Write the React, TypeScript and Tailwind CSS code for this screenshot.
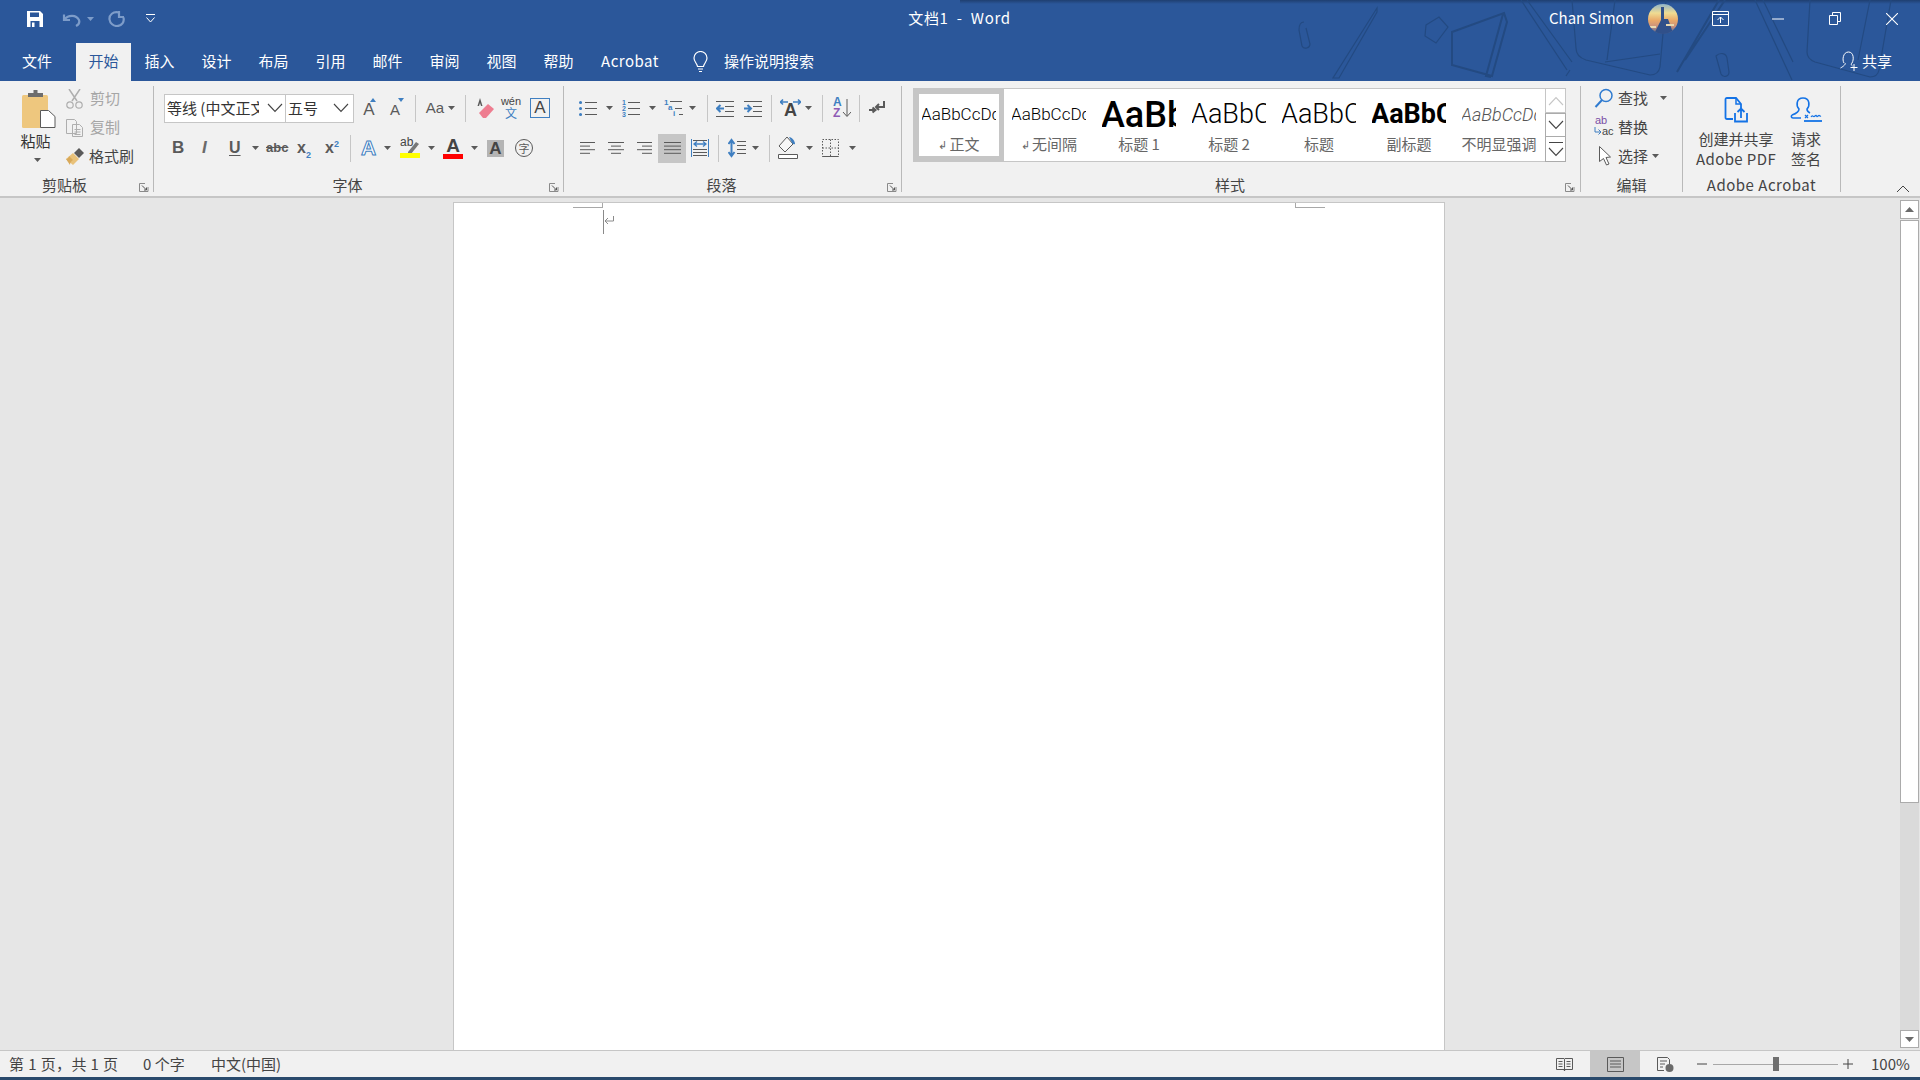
import React from "react";

type IP = { w: number; h: number; c?: string; children: React.ReactNode };
const I = ({ w, h, c, children }: IP) => (
  <svg width={w} height={h} viewBox={`0 0 ${w} ${h}`} fill="none" className={"shrink-0 " + (c ?? "")}>
    {children}
  </svg>
);
const G = "#5a5a5a";
const B = "#3f7fc1";

const Caret = ({ c = "", color = G }: { c?: string; color?: string }) => (
  <I w={7} h={4} c={c}>
    <path d="M0 0H7L3.5 4Z" fill={color} />
  </I>
);
const Sep = ({ c = "" }: { c?: string }) => <div className={"w-px h-[27px] bg-[#c6c6c6] shrink-0 " + c} />;

const Launcher = ({ c }: { c: string }) => (
  <I w={10} h={9} c={"absolute bottom-0 " + c}>
    <path d="M.5 8.5V.5H6M.5 8.5H9V4" stroke="#8a8a8a" />
    <path d="M3 2.5 7.5 7M7.5 4.5V7H5" stroke="#555" />
  </I>
);

const Group = ({ w, title, children, launcher, t = "" }: { w: string; title: string; children: React.ReactNode; launcher?: string; t?: string }) => (
  <div className={"relative flex flex-col h-[106px] mt-[5px] border-r border-[#b9b9b9] shrink-0 " + w}>
    <div className="h-[91px] overflow-visible">{children}</div>
    <div className={"h-[15px] leading-[16px] text-center text-[15px] text-[#444444] " + t}>{title}</div>
    {launcher && <Launcher c={launcher} />}
  </div>
);

const Row = ({ children }: { children: React.ReactNode }) => <div className="flex items-center h-[28px]">{children}</div>;

const lineSet = (ys: number[], x1: number, x2: number) => ys.map((y) => <path key={y} d={`M${x1} ${y + 0.5}H${x2}`} stroke={G} />);
const Align = ({ w, rows, c }: { w: number; rows: [number, number][]; c?: string }) => (
  <I w={w} h={14} c={c}>
    {rows.map(([a, b], i) => (
      <path key={i} d={`M${a} ${1.5 + i * 3.6}H${b}`} stroke={G} />
    ))}
  </I>
);

const Chevron = ({ c = "", color = "#444" }: { c?: string; color?: string }) => (
  <I w={16} h={10} c={c}>
    <path d="M1 1 8 8.5 15 1" stroke={color} strokeWidth="1.1" />
  </I>
);

function Paste() {
  return (
    <I w={35} h={38}>
      <rect x="1" y="5" width="26" height="33" rx="1.5" fill="#eec77e" />
      <path d="M7 5V3h5.5V0h4v3H22v4H7Z" fill="#6d6d6d" />
      <path d="M19.5 20.5h8l6.5 6v11H19.5Z" fill="#fff" stroke="#5a5a5a" />
    </I>
  );
}

const Style = ({ text, label, ret, sel, p }: { text: string; label: string; ret?: boolean; sel?: boolean; p: string }) => (
  <div className={"flex flex-col items-center h-[72px] w-[90px] border-[5px] shrink-0 " + (sel ? "border-[#c6c6c6]" : "border-transparent")}>
    <div className="h-[40px] w-[74px] overflow-hidden flex items-center">
      <span className={"whitespace-nowrap -ml-[1px] pt-[1px] font-['Roboto',sans-serif] " + p}>{text}</span>
    </div>
    <div className="h-[20px] leading-[20px] text-[15px] text-[#666666] whitespace-nowrap flex items-center">
      {ret && <span className="text-[11px] mr-[2px]">↲</span>}
      {label}
    </div>
  </div>
);

export default function App() {
  return (
    <div className="w-[1920px] h-[1080px] flex flex-col overflow-hidden bg-[#e6e6e6] text-[15px] font-['Noto_Sans_CJK_SC','Liberation_Sans',sans-serif]">
      {/* title + tabs */}
      <div className="relative h-[81px] bg-[#2b579a] text-white shrink-0">
        <div className="absolute top-0 right-0 w-[960px] h-[4px] bg-gradient-to-b from-[#1f3f70] to-transparent" />
        <svg width={640} height={81} viewBox="0 0 640 81" fill="none" className="absolute top-0 right-0" stroke="#234a82" strokeWidth="1.2">
          <path d="M97 8 53 78h6L97 12ZM24 22c-5 0-5 5-5 8l3 16c2 4 8 2 8-2l-4-16" />
          <path d="M146 25l13-8 9 10-12 16-11-7Z" />
          <path d="M172 32l52-19 3 9-15 54-40-11ZM223 14l-17 62 5 1" strokeWidth="2" />
          <path d="M241 0l46 70M247 0l45 62M290 70l-4 6" />
          <path d="M292 0l4 48c0 6 4 10 10 12l64 15c6 0 9-3 10-8l6-67M325 62l55-8M335 0l-8 60" />
          <path d="M439 0l-42 72M445 0l-40 60" strokeWidth="2" />
          <path d="M436 56c4-4 10-3 11 2l2 14c0 5-6 6-8 2Z" />
          <path d="M475 0l37 80M483 0l30 62" />
          <path d="M530 0l-3 52c0 5 3 8 8 10l55 15c5 0 8-2 9-7l12-70M590 0l-12 60" />
        </svg>
        <div className="relative flex items-center h-[37px]">
          <I w={16} h={16} c="ml-[27px]">
            <path d="M0 0H13L16 3V16H0Z" fill="#fff" />
            <path d="M3 1.5H12V6H3ZM3.5 10H12.5V16H3.5Z" fill="#2b579a" />
            <path d="M5 11.5H7.5V16H5Z" fill="#fff" />
          </I>
          <I w={19} h={16} c="ml-[19px]">
            <path d="M2 3.5V9H8M2.5 8.5C6 4 14 3 17 9c1 3-1 5-3 6" stroke="#7d9cc9" strokeWidth="2.200" />
          </I>
          <Caret c="ml-[6px]" color="#7d9cc9" />
          <I w={17} h={16} c="ml-[14px]">
            <path d="M11 1.5C5 0 1 4 1.500 8.500c.5 4 4 6.500 7.500 6.500 5 0 7.500-4 6.500-8.500M11 0v6h5" stroke="#7d9cc9" strokeWidth="2.200" />
          </I>
          <I w={9} h={10} c="ml-[21px]">
            <path d="M0 .5H9M.5 3.500 4.500 8 8.500 3.500" stroke="#fff" />
          </I>
          <div className="ml-[753px] w-[103px] whitespace-pre text-center leading-[20px] pb-[2px] tracking-[0.7px]">{"文档1  -  Word"}</div>
          <div className="ml-[538px] w-[86px] whitespace-nowrap leading-[20px] pb-[1px]">Chan Simon</div>
          <I w={30} h={30} c="ml-[13px]">
            <defs>
              <clipPath id="av">
                <ellipse cx="15" cy="15" rx="15" ry="15" />
              </clipPath>
              <linearGradient id="avg" x1="0" y1="0" x2="0" y2="1">
                <stop offset="0" stopColor="#8fb3c9" />
                <stop offset=".3" stopColor="#efdc93" />
                <stop offset=".55" stopColor="#e9a868" />
                <stop offset=".75" stopColor="#c9917e" />
                <stop offset="1" stopColor="#3c5f94" />
              </linearGradient>
            </defs>
            <g clipPath="url(#av)">
              <rect width="30" height="30" fill="url(#avg)" />
              <path d="M13 3h3v12h4l3 8 2 7H6l4-8 3-6Z" fill="#30508a" />
              <path d="M2 22h6v2H2ZM18 20h8v2h-8Z" fill="#e8d8b0" />
            </g>
          </I>
          <I w={17} h={15} c="ml-[34px]">
            <path d="M.5.5h16v14H.5ZM.5 3.500h16" stroke="#fff" />
            <path d="M8.500 12V6M5.500 9l3-3 3 3" stroke="#fff" />
          </I>
          <I w={12} h={2} c="ml-[43px]">
            <path d="M0 1H12" stroke="#fff" />
          </I>
          <I w={12} h={13} c="ml-[45px]">
            <path d="M.5 3.500h8v9h-8ZM3.500 3.500v-3h8v9h-3" stroke="#fff" />
          </I>
          <I w={12} h={12} c="ml-[45px]">
            <path d="M0 0 12 12M12 0 0 12" stroke="#fff" strokeWidth="1.1" />
          </I>
        </div>
        <div className="relative flex h-[44px] items-end">
          <div className="ml-[8px] w-[58px] h-[38px] leading-[36px] text-center">文件</div>
          <div className="ml-[10px] w-[55px] h-[38px] leading-[36px] text-center bg-[#f1f1f1] text-[#2b579a]">开始</div>
          <div className="w-[57px] h-[38px] leading-[36px] text-center">插入</div>
          <div className="w-[57px] h-[38px] leading-[36px] text-center">设计</div>
          <div className="w-[57px] h-[38px] leading-[36px] text-center">布局</div>
          <div className="w-[57px] h-[38px] leading-[36px] text-center">引用</div>
          <div className="w-[57px] h-[38px] leading-[36px] text-center">邮件</div>
          <div className="w-[57px] h-[38px] leading-[36px] text-center">审阅</div>
          <div className="w-[57px] h-[38px] leading-[36px] text-center">视图</div>
          <div className="w-[57px] h-[38px] leading-[36px] text-center">帮助</div>
          <div className="w-[86px] h-[38px] leading-[36px] text-center tracking-[0.5px]">Acrobat</div>
          <div className="flex items-center h-[36px] mb-[2px] ml-[20px]">
            <I w={15} h={21}>
              <path d="M4.500 15.500C4 12 1 11 1 7a6.500 6.500 0 0 1 13 0c0 4-3 5-3.500 8.500ZM5 18h5M6 20.500h3" stroke="#fff" strokeWidth="1.2" />
            </I>
            <span className="ml-[16px] whitespace-nowrap">操作说明搜索</span>
          </div>
          <div className="ml-auto mr-[28px] flex items-center h-[36px] mb-[2px]">
            <I w={18} h={20}>
              <path d="M4 12C2 9 3 1 8.500 1S14 9 12 12c-1 1-1 2 .5 3M5 12c1 1-1 3-4.500 5" stroke="#fff" />
              <path d="M14 13v7M10.500 16.500h7" stroke="#fff" />
            </I>
            <span className="ml-[4px] whitespace-nowrap">共享</span>
          </div>
        </div>
      </div>

      {/* ribbon */}
      <div className="flex h-[117px] bg-[#f1f1f1] border-b-2 border-[#c6c6c6] shrink-0 text-[#444444]">
        {/* clipboard */}
        <Group w="w-[154px]" title="剪贴板" launcher="right-[4px]" t="pr-[24px]">
          <div className="flex">
            <div className="ml-[20px] w-[36px] flex flex-col items-center pt-[4px]">
              <Paste />
              <span className="mt-[3px] mr-[5px] leading-[20px] whitespace-nowrap text-[#333333]">粘贴</span>
              <Caret c="mt-[7px] mr-[2px]" />
            </div>
            <div className="ml-[10px] flex flex-col">
              <div className="flex items-center h-[29px] mt-[-2px] text-[#a6a6a6]">
                <I w={17} h={20}>
                  <path d="M3 0 11 12M14 0 6 12" stroke="#aeaeae" strokeWidth="1.5" />
                  <circle cx="4" cy="16" r="3.200" stroke="#aeaeae" strokeWidth="1.200" />
                  <circle cx="13" cy="16" r="3.200" stroke="#aeaeae" strokeWidth="1.200" />
                </I>
                <span className="ml-[7px] whitespace-nowrap">剪切</span>
              </div>
              <div className="flex items-center h-[29px] text-[#a6a6a6]">
                <I w={17} h={18}>
                  <path d="M.5.5h8l2 2v12H.5ZM6.500 5.500h7l3 3v9h-10Z" stroke="#aeaeae" fill="#f1f1f1" />
                  <path d="M8.500 10.500h6M8.500 13h6M8.500 15.500h6" stroke="#aeaeae" />
                </I>
                <span className="ml-[7px] whitespace-nowrap">复制</span>
              </div>
              <div className="flex items-center h-[29px]">
                <I w={18} h={17}>
                  <path d="M0 11 7 5l6 6-6 6Z" fill="#e9c27a" />
                  <path d="M0 11c2 0 3-2 3-3l4 4c-2 1-3 3-3 5Z" fill="#d8a95a" />
                  <path d="M8 5 13 0l5 5-5 5Z" fill="#5a5a5a" />
                </I>
                <span className="ml-[5px] whitespace-nowrap">格式刷</span>
              </div>
            </div>
          </div>
        </Group>

        {/* font */}
        <Group w="w-[410px]" title="字体" launcher="right-[4px]" t="pr-[22px]">
          <div className="pt-[8px]">
            <Row>
              <div className="ml-[10px] w-[122px] h-[29px] bg-white border border-[#c6c6c6] flex items-center pl-[2px] shrink-0">
                <span className="w-[92px] overflow-hidden whitespace-nowrap text-[#333333]">等线 (中文正文)</span>
                <Chevron c="ml-[8px]" />
              </div>
              <div className="w-[69px] h-[29px] bg-white border border-[#c6c6c6] flex items-center pl-[2px] ml-[-1px] shrink-0">
                <span className="w-[44px] whitespace-nowrap text-[#333333]">五号</span>
                <Chevron c="ml-[1px]" />
              </div>
              <div className="ml-[5px] w-[20px] h-[24px] relative shrink-0 text-center leading-[28px] text-[17px] text-[#5a5a5a] font-['Liberation_Sans',sans-serif]">
                A
                <I w={6} h={4} c="absolute top-[2px] right-[3px]">
                  <path d="M0 4 3 0 6 4Z" fill={B} />
                </I>
              </div>
              <div className="ml-[6px] w-[20px] h-[24px] relative shrink-0 text-center leading-[28px] text-[15px] text-[#5a5a5a] font-['Liberation_Sans',sans-serif]">
                A
                <I w={6} h={4} c="absolute top-[2px] right-[1px]">
                  <path d="M0 0H6L3 4Z" fill={B} />
                </I>
              </div>
              <Sep c="ml-[10px]" />
              <div className="ml-[9px] w-[20px] text-center text-[15px] leading-[20px] text-[#5a5a5a] font-['Liberation_Sans',sans-serif] shrink-0">Aa</div>
              <Caret c="ml-[3px]" />
              <Sep c="ml-[10px]" />
              <I w={17} h={21} c="ml-[11px]">
                <path d="M3 0 .5 8h1.500L3 5l1 3h1.500Z" fill={G} />
                <path d="M2 15 11 6l6 5-8 9H6Z" fill="#ee7d90" />
              </I>
              <div className="ml-[9px] w-[16px] h-[26px] flex flex-col items-center leading-[12px] shrink-0">
                <span className="text-[11px] text-[#444444] font-['Liberation_Sans',sans-serif]">wén</span>
                <span className="text-[12px] text-[#3f7fc1]">文</span>
              </div>
              <div className="ml-[11px] w-[20px] h-[20px] border border-[#3f7fc1] text-center leading-[18px] text-[17px] text-[#444444] font-['Liberation_Sans',sans-serif] shrink-0">A</div>
            </Row>
            <div className="flex items-center h-[28px] mt-[12px] font-['Liberation_Sans',sans-serif] text-[#5a5a5a]">
              <span className="ml-[18px] w-[10px] font-bold text-[17px] leading-[20px] shrink-0">B</span>
              <span className="ml-[20px] w-[9px] italic font-bold text-[17px] leading-[20px] text-[#6a6a6a] shrink-0">I</span>
              <span className="ml-[18px] w-[10px] font-bold text-[16px] leading-[20px] underline underline-offset-2 shrink-0">U</span>
              <Caret c="ml-[13px]" />
              <span className="ml-[7px] w-[20px] text-[13px] font-bold leading-[18px] line-through shrink-0">abc</span>
              <span className="ml-[11px] w-[14px] font-bold text-[16px] leading-[20px] relative shrink-0">
                x<span className="absolute left-[9px] top-[7px] text-[9px] text-[#3f7fc1]">2</span>
              </span>
              <span className="ml-[14px] w-[14px] font-bold text-[16px] leading-[20px] relative shrink-0">
                x<span className="absolute left-[9px] top-[-4px] text-[9px] text-[#3f7fc1]">2</span>
              </span>
              <Sep c="ml-[11px]" />
              <span className="ml-[10px] w-[16px] text-[21px] leading-[22px] font-bold text-white [-webkit-text-stroke:1px_#3f7fc1] shrink-0">A</span>
              <Caret c="ml-[7px]" />
              <div className="ml-[9px] w-[20px] h-[20px] relative flex flex-col shrink-0">
                <I w={20} h={20}>
                  <path d="M8 14 16 4l3 2-8 10H8Z" fill="#777" />
                  <rect y="15" width="20" height="5" fill="#ffff00" />
                </I>
                <span className="absolute left-0 top-[-2px] text-[12px] leading-[12px] text-[#444444]">ab</span>
              </div>
              <Caret c="ml-[8px]" />
              <div className="ml-[8px] w-[20px] h-[22px] flex flex-col items-center shrink-0">
                <span className="h-[16px] text-[19px] leading-[17px] font-bold text-[#444444]">A</span>
                <span className="w-[20px] h-[5px] mt-[1px] bg-[#ff0000]" />
              </div>
              <Caret c="ml-[8px]" />
              <span className="ml-[9px] w-[17px] h-[17px] bg-[#b4b4b4] text-center text-[17px] leading-[18px] font-bold text-[#444444] shrink-0">A</span>
              <span className="ml-[11px] w-[18px] h-[18px] rounded-full border border-[#5a5a5a] text-center text-[11px] leading-[16px] shrink-0 font-['Noto_Sans_CJK_SC',sans-serif]">字</span>
            </div>
          </div>
        </Group>

        {/* paragraph */}
        <Group w="w-[338px]" title="段落" launcher="right-[4px]" t="pr-[22px]">
          <div className="pt-[8px]">
            <Row>
              <I w={18} h={17} c="ml-[15px]">
                <path d="M1.500 2.500h.1M1.500 8.500h.1M1.500 14.500h.1" stroke={B} strokeWidth="3" strokeLinecap="round" />
                {lineSet([2, 8, 14], 6, 18)}
              </I>
              <Caret c="ml-[9px]" />
              <div className="ml-[9px] w-[18px] h-[17px] relative shrink-0">
                <I w={18} h={17}>{lineSet([2, 8, 14], 6, 18)}</I>
                <span className="absolute left-0 top-0 w-[5px] flex flex-col text-[7px] leading-[6px] font-bold text-[#3f7fc1] font-['Liberation_Sans',sans-serif]">
                  <span>1</span>
                  <span>2</span>
                  <span>3</span>
                </span>
              </div>
              <Caret c="ml-[9px]" />
              <div className="ml-[8px] w-[19px] h-[17px] relative shrink-0">
                <I w={19} h={17}>
                  {lineSet([1], 6, 18)}
                  {lineSet([8], 11, 18)}
                  {lineSet([14], 15, 19)}
                </I>
                <span className="absolute left-0 top-0 text-[8px] leading-[6px] font-bold text-[#3f7fc1] font-['Liberation_Sans',sans-serif]">1</span>
                <span className="absolute left-[4px] top-[5px] text-[8px] leading-[6px] font-bold text-[#3f7fc1] font-['Liberation_Sans',sans-serif]">a</span>
                <span className="absolute left-[9px] top-[11px] text-[8px] leading-[6px] font-bold text-[#3f7fc1] font-['Liberation_Sans',sans-serif]">i</span>
              </div>
              <Caret c="ml-[6px]" />
              <Sep c="ml-[11px]" />
              <I w={18} h={17} c="ml-[8px]">
                {lineSet([1, 16], 0, 18)}
                {lineSet([6, 11], 9, 18)}
                <path d="M8 8.500H1M4.500 5 1 8.500 4.500 12" stroke={B} strokeWidth="2" />
              </I>
              <I w={18} h={17} c="ml-[10px]">
                {lineSet([1, 16], 0, 18)}
                {lineSet([6, 11], 9, 18)}
                <path d="M0 8.500H7M3.500 5 7 8.500 3.500 12" stroke={B} strokeWidth="2" />
              </I>
              <Sep c="ml-[9px]" />
              <div className="ml-[8px] w-[21px] h-[20px] relative shrink-0">
                <I w={21} h={20}>
                  <path d="M1 4h7M3 1.500.5 4 3 6.500M13 4h7M18 1.500 20.500 4 18 6.500" stroke={B} strokeWidth="1.600" />
                </I>
                <span className="absolute left-[2px] top-[3px] w-[17px] text-center text-[18px] leading-[18px] font-bold text-[#444444] font-['Liberation_Sans',sans-serif]">A</span>
              </div>
              <Caret c="ml-[4px]" />
              <Sep c="ml-[10px]" />
              <div className="ml-[10px] w-[18px] h-[20px] relative shrink-0 font-['Liberation_Sans',sans-serif]">
                <span className="absolute left-0 top-[-1px] text-[12px] leading-[11px] text-[#3f7fc1] font-bold">A</span>
                <span className="absolute left-0 top-[10px] text-[12px] leading-[11px] text-[#8e5ab5] font-bold">Z</span>
                <I w={18} h={20}>
                  <path d="M14 1V18M10 14l4 4.500 4-4.500" stroke={G} />
                </I>
              </div>
              <Sep c="ml-[8px]" />
              <I w={16} h={16} c="ml-[9px]">
                <path d="M15 1v6H7.500M10 4 7 7l3 3" stroke={G} strokeWidth="2" />
                <path d="M0 10h6M3.500 7.500l3 2.500-3 2.500" stroke={G} strokeWidth="2" />
              </I>
            </Row>
            <div className="flex items-center h-[28px] mt-[12px]">
              <Align w={15} c="ml-[16px]" rows={[[0, 15], [0, 10], [0, 15], [0, 10]]} />
              <Align w={16} c="ml-[13px]" rows={[[0, 16], [3, 13], [0, 16], [3, 13]]} />
              <Align w={15} c="ml-[13px]" rows={[[0, 15], [5, 15], [0, 15], [5, 15]]} />
              <div className="ml-[6px] w-[28px] h-[29px] bg-[#c6c6c6] flex items-center justify-center shrink-0">
                <Align w={17} rows={[[0, 17], [0, 17], [0, 17], [0, 17]]} />
              </div>
              <I w={18} h={18} c="ml-[5px]">
                <path d="M.5 0v18M17.500 0v18" stroke={B} />
                {lineSet([1, 10, 13, 16], 2, 16)}
                <path d="M3 5h12M6 2.500 3 5l3 2.500M12 2.500 15 5l-3 2.500" stroke={B} strokeWidth="1.300" />
              </I>
              <Sep c="ml-[9px]" />
              <I w={18} h={20} c="ml-[9px]">
                <path d="M3.500 3v14M.5 6l3-4 3 4M.5 14l3 4 3-4" stroke={B} strokeWidth="2" />
                {lineSet([3, 7, 11, 15], 9, 18)}
              </I>
              <Caret c="ml-[6px]" />
              <Sep c="ml-[10px]" />
              <I w={20} h={22} c="ml-[8px]">
                <path d="M9 0 1 9l6 6 8-8Z" stroke={G} fill="#f7f7f7" />
                <path d="M11 0c3 0 6 4 6 7-2 1-3-1-4-3Z" fill={B} />
                <path d="M.5 17.500h19v4H.5Z" stroke={G} fill="#fff" />
              </I>
              <Caret c="ml-[8px]" />
              <I w={17} h={18} c="ml-[9px]">
                <path d="M.5.5h16v17H.5ZM8.500.5v17M.5 9h16" stroke={G} strokeDasharray="1.500 1.500" />
                <path d="M.5 17.500h16" stroke={G} />
              </I>
              <Caret c="ml-[10px]" />
            </div>
          </div>
        </Group>

        {/* styles */}
        <Group w="w-[679px]" title="样式" launcher="right-[5px]" t="pr-[22px]">
          <div className="flex ml-[11px] mt-[2px] h-[74px]">
            <div className="w-[632px] h-[74px] bg-white border-y border-l border-[#c6c6c6] flex shrink-0 text-black">
              <Style sel ret text="AaBbCcDdEe" label="正文" p="text-[17px] font-light" />
              <Style ret text="AaBbCcDdEe" label="无间隔" p="text-[17px] font-light" />
              <Style text="AaBbCc" label="标题 1" p="text-[36px] font-medium" />
              <Style text="AaBbCc" label="标题 2" p="text-[27px] font-light" />
              <Style text="AaBbCc" label="标题" p="text-[27px] font-light" />
              <Style text="AaBbCc" label="副标题" p="text-[27px] font-bold" />
              <Style text="AaBbCcDdEe" label="不明显强调" p="text-[18px] italic font-light text-[#555555]" />
            </div>
            <div className="w-[21px] h-[74px] flex flex-col shrink-0">
              <div className="h-[25px] border border-[#c6c6c6] bg-white flex items-center justify-center">
                <I w={16} h={10}>
                  <path d="M1 9 8 1.500 15 9" stroke="#c6c6c6" strokeWidth="1.100" />
                </I>
              </div>
              <div className="h-[24px] border-x border-[#ababab] border-y bg-white flex items-center justify-center">
                <Chevron />
              </div>
              <div className="h-[25px] border border-t-0 border-[#ababab] bg-white flex flex-col items-center justify-center gap-[4px]">
                <div className="w-[14px] h-px bg-[#444444]" />
                <Chevron />
              </div>
            </div>
          </div>
        </Group>

        {/* editing */}
        <Group w="w-[102px]" title="编辑">
          <div className="flex flex-col justify-between h-[82px]">
            <div className="flex items-center h-[24px]">
              <I w={19} h={20} c="ml-[13px]">
                <circle cx="12" cy="7.500" r="6" stroke="#2f7bd0" strokeWidth="1.500" />
                <path d="M8 12 1.500 19" stroke="#2f7bd0" strokeWidth="2" />
              </I>
              <span className="ml-[5px] whitespace-nowrap">查找</span>
              <Caret c="ml-[12px]" />
            </div>
            <div className="flex items-center h-[24px]">
              <div className="ml-[13px] w-[21px] h-[22px] relative shrink-0 font-['Liberation_Sans',sans-serif]">
                <span className="absolute left-[1px] top-[-1px] text-[11px] leading-[11px] text-[#7a4fa5]">ab</span>
                <span className="absolute left-[8px] top-[10px] text-[11px] leading-[11px] text-[#444444]">ac</span>
                <I w={8} h={10} c="absolute left-0 top-[11px]">
                  <path d="M1 0v5h6M4.500 2.500 7 5 4.500 7.500" stroke={B} />
                </I>
              </div>
              <span className="ml-[3px] whitespace-nowrap">替换</span>
            </div>
            <div className="flex items-center h-[24px]">
              <I w={12} h={20} c="ml-[18px]">
                <path d="M.5.5v15l4-3 3 6.500 2.500-1-3-6.500 4.500-.5Z" stroke={G} fill="#fff" />
              </I>
              <span className="ml-[7px] whitespace-nowrap">选择</span>
              <Caret c="ml-[4px]" />
            </div>
          </div>
        </Group>

        {/* acrobat */}
        <Group w="w-[158px]" title="Adobe Acrobat" t="tracking-[0.5px] whitespace-nowrap">
          <div className="flex">
            <div className="w-[106px] flex flex-col items-center pt-[11px] shrink-0">
              <I w={24} h={26}>
                <path d="M9 22H3c-1 0-1.500-.5-1.500-1.500V2.500C1.500 1.500 2 1 3 1h9l5 6v4" stroke="#1473e6" strokeWidth="1.800" />
                <path d="M12 1v6h5" stroke="#1473e6" strokeWidth="1.500" />
                <path d="M11 16v8.500h12V16M17 21v-9M13.500 15l3.500-3.500 3.500 3.500" stroke="#1473e6" strokeWidth="1.800" />
              </I>
              <span className="mt-[6px] h-[20px] leading-[20px] whitespace-nowrap">创建并共享</span>
              <span className="h-[19px] leading-[19px] whitespace-nowrap tracking-[0.4px]">Adobe PDF</span>
            </div>
            <div className="w-[34px] flex flex-col items-center pt-[11px] shrink-0">
              <I w={32} h={26}>
                <path d="M2 18c3-1 7-3 7-6-3-3-3-11 4-11s7 8 4 11c0 2 1 3 3 4M2 18c-1 1-1 3 1 3h8" stroke="#1473e6" strokeWidth="1.600" />
                <path d="M15 18l3 3M18 18l-3 3M21 20c2-3 2 1 4-1s1 2 3 0 1 1 3 0" stroke="#1473e6" strokeWidth="1.200" />
                <path d="M14 24h18" stroke="#1473e6" strokeWidth="1.800" />
              </I>
              <span className="mt-[6px] h-[20px] leading-[20px] whitespace-nowrap">请求</span>
              <span className="h-[19px] leading-[19px] whitespace-nowrap">签名</span>
            </div>
          </div>
        </Group>

        <I w={14} h={8} c="self-end mb-[3px] ml-[55px]">
          <path d="M1 7 7 1l6 6" stroke="#444" />
        </I>
      </div>

      {/* document area */}
      <div className="flex-1 flex min-h-0 bg-[#e6e6e6]">
        <div className="flex-1 flex justify-center pt-[4px] pr-[2px] min-w-0">
          <div className="relative w-[992px] h-full bg-white border-x border-t border-[#c6c6c6]">
            <div className="absolute left-[119px] top-0 w-[30px] h-[5px] border-b border-r border-[#a8a8a8]" />
            <div className="absolute left-[841px] top-0 w-[30px] h-[5px] border-b border-l border-[#a8a8a8]" />
            <div className="absolute left-[149px] top-[7px] w-px h-[24px] bg-[#8a8a8a]" />
            <I w={11} h={9} c="absolute left-[150px] top-[13px]">
              <path d="M9.500 0v5H1M4 2 1 5l3 3" stroke="#8a8a8a" />
            </I>
          </div>
        </div>
        <div className="w-[19px] mr-px pt-[2px] pb-[2px] flex flex-col shrink-0 bg-[#e6e6e6]">
          <div className="h-[19px] bg-white border border-[#ababab] flex items-center justify-center shrink-0">
            <I w={9} h={5}>
              <path d="M0 5 4.500 0 9 5Z" fill="#6a6a6a" />
            </I>
          </div>
          <div className="h-[583px] mt-px bg-white border border-[#ababab] shrink-0" />
          <div className="flex-1 bg-[#dadada]" />
          <div className="h-[18px] bg-white border border-[#ababab] flex items-center justify-center shrink-0">
            <I w={9} h={5}>
              <path d="M0 0H9L4.500 5Z" fill="#6a6a6a" />
            </I>
          </div>
        </div>
      </div>

      {/* status */}
      <div className="h-[27px] flex items-center bg-[#f1f1f1] border-t border-[#c6c6c6] text-[15px] text-[#444444] shrink-0">
        <span className="ml-[9px] w-[109px] whitespace-nowrap leading-[20px] tracking-[0.4px]">第 1 页，共 1 页</span>
        <span className="ml-[25px] w-[43px] whitespace-nowrap leading-[20px]">0 个字</span>
        <span className="ml-[25px] w-[68px] whitespace-nowrap leading-[20px]">中文(中国)</span>
        <I w={17} h={15} c="ml-[1277px]">
          <path d="M.5 1.500h7.500l.5 1 .5-1h7.500v11H9l-.5 1.500-.5-1.500H.5ZM8.500 2.500v11" stroke={G} />
          <path d="M2.500 4.500h4M2.500 7h4M2.500 9.500h4M10.500 4.500h4M10.500 7h4M10.500 9.500h4" stroke={G} />
        </I>
        <div className="ml-[17px] w-[50px] h-[26px] bg-[#c6c6c6] flex items-center justify-center shrink-0">
          <I w={17} h={15}>
            <path d="M.5.5h16v14H.5Z" stroke={G} />
            <path d="M3 4h11M3 7h11M3 10h11" stroke={G} />
          </I>
        </div>
        <I w={17} h={15} c="ml-[17px]">
          <path d="M.5.5h10l2 2v5M.5.5v13H7" stroke={G} />
          <path d="M3 4h7M3 7h5M3 10h3" stroke={G} />
          <circle cx="12.500" cy="11" r="4" fill="#6a6a6a" />
        </I>
        <I w={10} h={2} c="ml-[23px]">
          <path d="M0 1H10" stroke="#444" />
        </I>
        <div className="ml-[6px] w-[125px] h-[14px] flex items-center shrink-0">
          <div className="w-[60px] h-px bg-[#a8a8a8]" />
          <div className="w-[6px] h-[14px] bg-[#6f6f6f]" />
          <div className="w-[59px] h-px bg-[#a8a8a8]" />
        </div>
        <I w={10} h={10} c="ml-[5px]">
          <path d="M0 5H10M5 0V10" stroke="#444" />
        </I>
        <span className="ml-[18px] w-[40px] whitespace-nowrap leading-[20px]">100%</span>
      </div>
      <div className="h-[3px] bg-[#2a4a6c] shrink-0" />
    </div>
  );
}
